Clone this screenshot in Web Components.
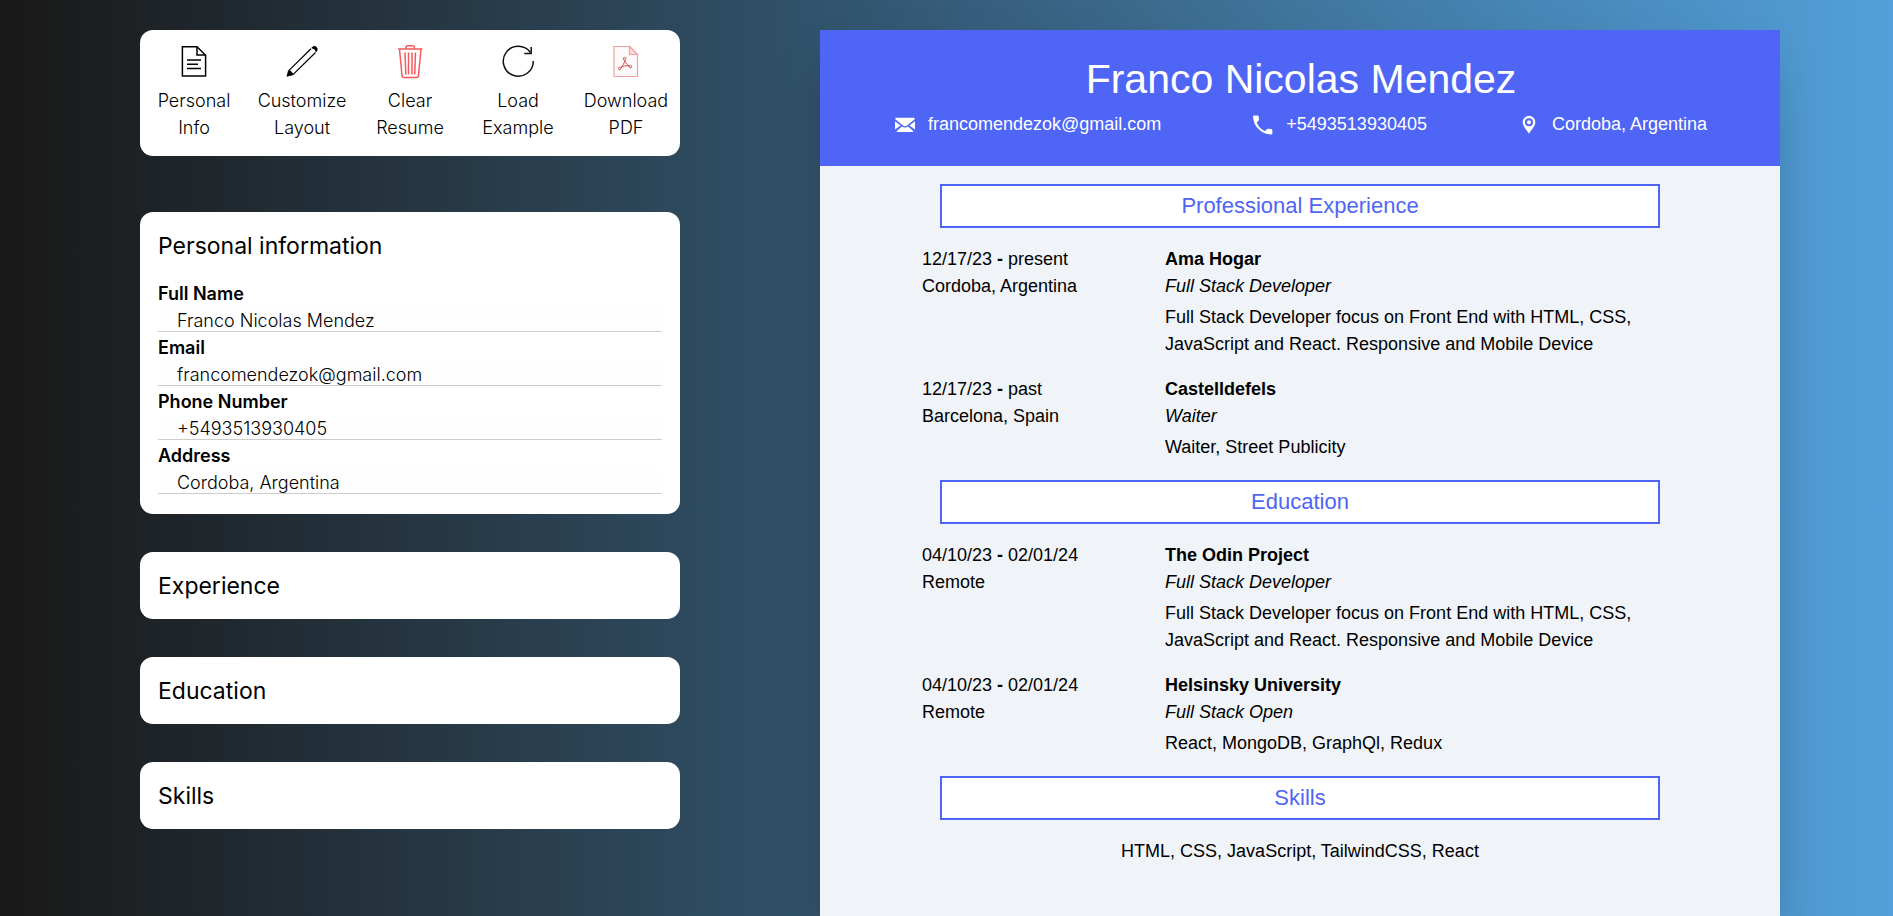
<!DOCTYPE html>
<html lang="en">
<head>
<meta charset="utf-8">
<meta name="viewport" content="width=device-width, initial-scale=1">
<title>CV Builder</title>
<style>
  html { font: 350 18px/27px Inter, sans-serif; color: #000; }
  body { margin: 0; }
</style>
</head>
<body>
<cv-app>
  <tool-bar slot="editor">
    <tool-button icon="info">Personal Info</tool-button>
    <tool-button icon="pencil">Customize Layout</tool-button>
    <tool-button icon="trash">Clear Resume</tool-button>
    <tool-button icon="reload">Load Example</tool-button>
    <tool-button icon="pdf">Download PDF</tool-button>
  </tool-bar>
  <div slot="editor" style="display:grid;gap:38px">
    <form-card heading="Personal information">
      <text-field label="Full Name" value="Franco Nicolas Mendez"></text-field>
      <text-field label="Email" type="email" value="francomendezok@gmail.com"></text-field>
      <text-field label="Phone Number" type="tel" value="+5493513930405"></text-field>
      <text-field label="Address" value="Cordoba, Argentina"></text-field>
    </form-card>
    <form-card heading="Experience"></form-card>
    <form-card heading="Education"></form-card>
    <form-card heading="Skills"></form-card>
  </div>

  <resume-sheet slot="preview">
    <span slot="name">Franco Nicolas Mendez</span>
    <contact-item slot="contact" icon="mail">francomendezok@gmail.com</contact-item>
    <contact-item slot="contact" icon="phone">+5493513930405</contact-item>
    <contact-item slot="contact" icon="pin">Cordoba, Argentina</contact-item>

    <resume-section heading="Professional Experience">
      <resume-entry from="12/17/23" to="present" place="Cordoba, Argentina" org="Ama Hogar" role-name="Full Stack Developer">Full Stack Developer focus on Front End with HTML, CSS, JavaScript and React. Responsive and Mobile Device</resume-entry>
      <resume-entry from="12/17/23" to="past" place="Barcelona, Spain" org="Castelldefels" role-name="Waiter">Waiter, Street Publicity</resume-entry>
    </resume-section>
    <resume-section heading="Education">
      <resume-entry from="04/10/23" to="02/01/24" place="Remote" org="The Odin Project" role-name="Full Stack Developer">Full Stack Developer focus on Front End with HTML, CSS, JavaScript and React. Responsive and Mobile Device</resume-entry>
      <resume-entry from="04/10/23" to="02/01/24" place="Remote" org="Helsinsky University" role-name="Full Stack Open">React, MongoDB, GraphQl, Redux</resume-entry>
    </resume-section>
    <resume-section heading="Skills">
      <span style="text-align:center">HTML, CSS, JavaScript, TailwindCSS, React</span>
    </resume-section>
  </resume-sheet>
</cv-app>

<script>
const ICONS = {
  info: `<svg viewBox="0 0 36 36" fill="none" stroke="#000" stroke-width="1.5"><path d="M6.400 3.700H21L29.600 12.300V33H6.400Z"/><path d="M21 3.700V12H29.600M11 17H25M11 21.200H22M11 25.500H25"/></svg>`,
  pencil: `<svg viewBox="0 0 36 36" fill="none" stroke="#000" stroke-width="1.200"><path d="M4.800 27.600L27 5.800M9 31.600L31.500 9.500"/><path d="M3 33.300L4.500 27.600L6.600 28L7.300 29.300L8.500 30L9 31.700Z" fill="#000" stroke-width=".8"/><path d="M27.800 4.800Q30.300 2.400 32.300 4.100Q34.200 6 32.200 8.700Q31.700 5.600 27.800 4.800Z" fill="#000" stroke-width="1"/></svg>`,
  trash: `<svg viewBox="0 0 36 36" fill="none" stroke="#f9585b" stroke-width="1.500"><path d="M6 6H30.500M14 6V4.500Q14 2.800 15.700 2.800H20.800Q22.500 2.800 22.500 4.500V6M7.500 6L10 32.500Q10.200 34.500 12 34.500H24.500Q26.300 34.500 26.500 32.500L29 6"/><path d="M13 9.500L13.800 31.500M16.500 9.500V31.500M20 9.500V31.500M23.500 9.500L22.700 31.500"/></svg>`,
  reload: `<svg viewBox="0 0 36 36" fill="none" stroke="#111" stroke-width="1.500"><path d="M33.300 18A15 15 0 1 1 30.500 9.500"/><path d="M31.200 4V10.600H24.300"/></svg>`,
  pdf: `<svg viewBox="0 0 36 36" fill="none" stroke="#efa0a2" stroke-width="1.200"><path d="M6 3.500H21.500L29.500 11.500V33.500H6Z" fill="#fffafa"/><path d="M21.500 3.500V11.500H29.500Z" fill="#fbdcdc"/><g stroke="#cf4a4f" stroke-width="1"><path d="M16.600 17.500C16.600 20 14.500 23.500 12.700 24.700M16.700 17.500C17.500 20 19.500 22.300 21.500 23.300M13 24.500C15 23 18.500 22.300 21.200 23"/><circle cx="16.600" cy="15.800" r="1.300"/><circle cx="11.700" cy="25.400" r="1.200"/><circle cx="22.500" cy="23.600" r="1.200"/></g></svg>`,
  mail: `<svg viewBox="0 0 20 20" fill="#fff"><path d="M1 2.700H19L20 4L12 10.500Q10 11.800 8 10.500L0 4ZM0 6.200L5.600 10.500L0 14.500ZM20 6.200L14.400 10.500L20 14.500ZM7 11.500Q10 13.400 13 11.500L18.500 16.200L17.500 17H2.500L1.500 16.200Z"/></svg>`,
  phone: `<svg viewBox="0 0 20 20" fill="#fff"><path d="M.9 .6H4.500Q5.600 .6 5.700 1.700L6 4.200Q6.100 5.300 5.300 6L3.700 7.400C5 11 8.500 14.700 12.300 16L13.700 14.300Q14.400 13.600 15.400 13.700L18.200 14.100Q19.400 14.300 19.400 15.400V18.500Q19.400 19.600 18.300 19.600C8 19.200 .4 11.500 0 1.600Q0 .6 .9 .6Z"/></svg>`,
  pin: `<svg viewBox="0 0 20 20" fill="#fff"><path fill-rule="evenodd" d="M10 .8A6.300 6.300 0 0 0 3.700 7.200C3.700 11.500 8.500 15.500 10 18.800C11.500 15.500 16.300 11.500 16.300 7.200A6.300 6.300 0 0 0 10 .8ZM10 3.200A4 4 0 1 1 10 11.200A4 4 0 1 1 10 3.200Z"/><circle cx="10" cy="7.200" r="2"/></svg>`,
};

/* Base class: renders the subclass's markup into an open shadow root. */
class Part extends HTMLElement {
  constructor() { super(); this.attachShadow({ mode: "open" }); }
  connectedCallback() {
    this.shadowRoot.innerHTML = `<style>*{box-sizing:border-box}${this.css()}</style>${this.html()}`;
  }
  attr(name) { return this.getAttribute(name) || ""; }
}

customElements.define("cv-app", class extends Part {
  css() { return `
    :host { display: grid; grid-template-columns: 9fr 16fr; gap: 140px; min-height: 100vh; padding: 30px 113px 0 140px;
      box-sizing: border-box; background: linear-gradient(90deg, #191817, #52a0db); }
    .editor { display: grid; gap: 56px; align-content: start; }
    .preview { display: grid; }
    .editor, .preview { min-width: 0; }`; }
  html() { return `<section class="editor"><slot name="editor"></slot></section><main class="preview"><slot name="preview"></slot></main>`; }
});

customElements.define("tool-bar", class extends Part {
  css() { return `:host { display: grid; grid-template-columns: repeat(5, 1fr); padding: 13px 0 15px; background: #fff; border-radius: 13px; }`; }
  html() { return `<slot></slot>`; }
});

customElements.define("tool-button", class extends Part {
  css() { return `
    :host { display: block; }
    button { display: grid; justify-items: center; gap: 8px; width: 100%; padding: 0 9px; border: 0; background: none;
      font: inherit; color: inherit; cursor: pointer; }
    svg { width: 36px; height: 36px; }`; }
  html() { return `<button type="button">${ICONS[this.attr("icon")]}<span><slot></slot></span></button>`; }
});

customElements.define("form-card", class extends Part {
  css() { return `
    :host { display: grid; gap: 18px; padding: 19px 18px 17px; background: #fff; border-radius: 13px; }
    :host(:not(:empty)) { padding-bottom: 18px; }
    h2 { margin: 0; font-size: 23px; line-height: 31px; font-weight: 400; }
    form { display: grid; }`; }
  html() { return `<h2>${this.attr("heading")}</h2>${this.children.length ? "<form><slot></slot></form>" : ""}`; }
});

customElements.define("text-field", class extends Part {
  css() { return `
    :host { display: grid; height: 54px; align-content: start; }
    label { font-weight: 600; }
    input { width: 100%; height: 25px; padding: 2px 19px 0; border: 0; border-bottom: 1px solid #ccc; border-radius: 0;
      background: #fefefe; font: inherit; color: inherit; outline: 0; }`; }
  html() { return `<label for="field">${this.attr("label")}</label><input id="field" type="${this.attr("type") || "text"}" value="${this.attr("value")}">`; }
});

customElements.define("resume-sheet", class extends Part {
  css() { return `
    :host { display: block; font: 400 18px/27px "Liberation Sans", Arial, sans-serif; background: #f0f4f9;
      box-shadow: 0 25px 50px -12px rgba(0, 0, 0, .25); }
    header { height: 136px; padding: 27px 27px 0 29px; background: #4f65f5; color: #fff; }
    h1 { margin: 0; font-size: 41px; line-height: 45px; font-weight: 400; text-align: center; }
    .contacts { display: flex; justify-content: space-around; margin-top: 9px; }
    .body { display: grid; gap: 19px; padding: 18px 0; }`; }
  html() { return `<header><h1><slot name="name"></slot></h1><div class="contacts"><slot name="contact"></slot></div></header><div class="body"><slot></slot></div>`; }
});

customElements.define("contact-item", class extends Part {
  css() { return `
    :host { display: flex; align-items: center; gap: 13px; }
    svg { width: 20px; height: 20px; }`; }
  html() { return `${ICONS[this.attr("icon")]}<span><slot></slot></span>`; }
});

customElements.define("resume-section", class extends Part {
  css() { return `
    :host { display: grid; gap: 18px; }
    h2 { width: 75%; margin: 0 auto; border: 2px solid #4f65f5; background: #fff; color: #4f65f5;
      font-size: 22px; line-height: 40px; font-weight: 400; text-align: center; }`; }
  html() { return `<h2>${this.attr("heading")}</h2><slot></slot>`; }
});

customElements.define("resume-entry", class extends Part {
  css() { return `
    :host { display: grid; grid-template-columns: 9fr 19fr; width: 78.75%; margin: 0 auto; }
    p { margin: 0; }
    .org { font-weight: 700; }
    .role { font-style: italic; }
    .text { margin-top: 4px; }`; }
  html() { return `
    <div><p>${this.attr("from")} <b>-</b> ${this.attr("to")}</p><p>${this.attr("place")}</p></div>
    <div><p class="org">${this.attr("org")}</p><p class="role">${this.attr("role-name")}</p><p class="text"><slot></slot></p></div>`; }
});
</script>
</body>
</html>
